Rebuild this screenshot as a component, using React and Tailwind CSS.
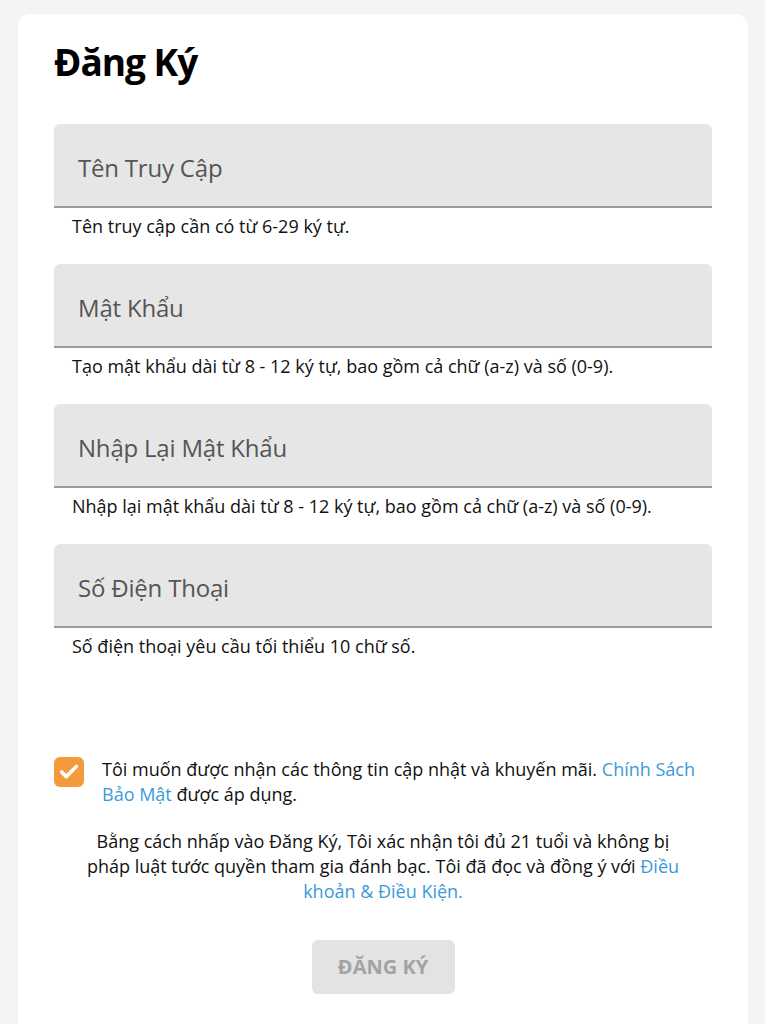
import { Check } from 'lucide-react'

const fields = [
  { label: 'Tên Truy Cập', hint: 'Tên truy cập cần có từ 6-29 ký tự.' },
  { label: 'Mật Khẩu', hint: 'Tạo mật khẩu dài từ 8 - 12 ký tự, bao gồm cả chữ (a-z) và số (0-9).' },
  { label: 'Nhập Lại Mật Khẩu', hint: 'Nhập lại mật khẩu dài từ 8 - 12 ký tự, bao gồm cả chữ (a-z) và số (0-9).' },
  { label: 'Số Điện Thoại', hint: 'Số điện thoại yêu cầu tối thiểu 10 chữ số.' },
]

export default function App() {
  return (
    <div className="min-h-screen bg-[#f4f4f4] px-[18px] pt-[14px] font-['Open_Sans',sans-serif] text-[#111]">
      <div className="bg-white rounded-t-xl px-9 pt-[22px] pb-[60px] w-[730px]">
        <h1 className="text-[37px] font-bold leading-[52px] tracking-[-1px] text-black">Đăng Ký</h1>

        <div className="mt-[36px]">
          {fields.map(f => (
            <div key={f.label} className="mb-[26px]">
              <div className="h-[84px] bg-[#e6e6e6] rounded-t-md border-b-2 border-[#9a9a9a] flex items-center px-6">
                <span className="text-[24px] text-[#555] pt-[6px] tracking-[-0.2px]">{f.label}</span>
              </div>
              <p className="mt-[6px] px-[18px] text-[18px] leading-6 text-[#111]">{f.hint}</p>
            </div>
          ))}
        </div>

        <div className="mt-[99px] flex items-start gap-[18px]">
          <div className="w-[30px] h-[30px] rounded-md bg-[#f29a3c] flex items-center justify-center shrink-0">
            <Check size={22} strokeWidth={4} className="text-white" />
          </div>
          <p className="text-[18px] leading-[25px]">
            Tôi muốn được nhận các thông tin cập nhật và khuyến mãi.{' '}
            <span className="text-[#3b9ad9]">Chính Sách Bảo Mật</span> được áp dụng.
          </p>
        </div>

        <p className="mt-[22px] mx-auto max-w-[605px] text-center text-[18px] leading-[25px]">
          Bằng cách nhấp vào Đăng Ký, Tôi xác nhận tôi đủ 21 tuổi và không bị pháp luật tước quyền tham gia đánh bạc. Tôi đã đọc và đồng ý với{' '}
          <span className="text-[#3b9ad9]">Điều khoản &amp; Điều Kiện.</span>
        </p>

        <div className="mt-[36px] flex justify-center">
          <button className="w-[143px] h-[54px] rounded-md bg-[#e3e3e3] text-[#a3a3a3] text-[20px] font-bold">
            ĐĂNG KÝ
          </button>
        </div>
      </div>
    </div>
  )
}
